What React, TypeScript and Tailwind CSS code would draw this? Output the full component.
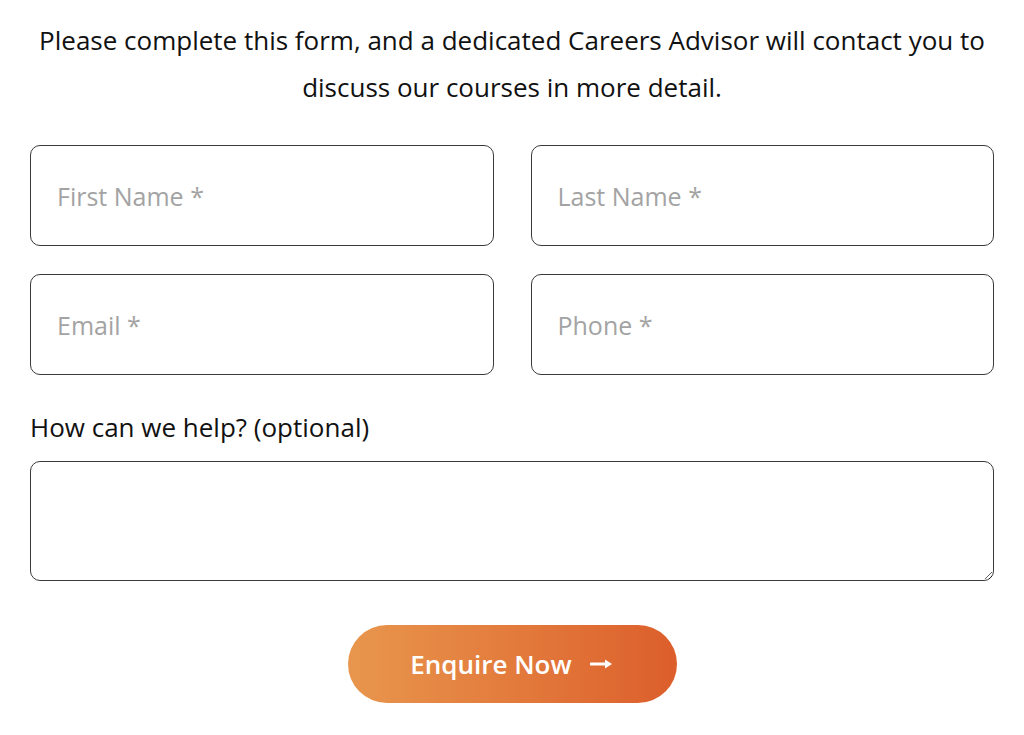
import * as React from 'react';

const Field: React.FC<{ placeholder: string }> = ({ placeholder }) => (
  <input
    type="text"
    placeholder={placeholder}
    className="h-[101px] w-full rounded-[10px] border-[1.5px] border-[#3a3a3a] bg-white pl-[26px] text-[25px] text-[#333] placeholder:text-[#a3a3a3] outline-none"
  />
);

export default function App() {
  return (
    <div
      className="min-h-[735px] w-full bg-white px-[30px] pt-[17px]"
      style={{ fontFamily: '"Open Sans", "Noto Sans", sans-serif' }}
    >
      <p className="text-center text-[26px] leading-[47px] text-[#111]">
        Please complete this form, and a dedicated Careers Advisor will contact you to
        <br />
        discuss our courses in more detail.
      </p>

      <div className="mt-[34px] grid grid-cols-2 gap-x-[37px] gap-y-[28px]">
        <Field placeholder="First Name *" />
        <Field placeholder="Last Name *" />
        <Field placeholder="Email *" />
        <Field placeholder="Phone *" />
      </div>

      <label className="mt-[35px] block text-[26px] leading-[34px] text-[#111]">
        How can we help? (optional)
      </label>
      <textarea className="mt-[17px] block h-[120px] w-full resize-y rounded-[10px] border-[1.5px] border-[#3a3a3a] bg-white px-[26px] py-3 text-[25px] outline-none" />

      <div className="mt-[44px] flex justify-center">
        <button className="flex h-[78px] w-[329px] items-center justify-center gap-[18px] rounded-full bg-gradient-to-r from-[#e8964d] to-[#dc5e2b] text-[26px] font-semibold text-white">
          <span>Enquire Now</span>
          <svg width="24" height="14" viewBox="0 0 24 14" fill="none">
            <path d="M1 7h17" stroke="white" strokeWidth="3" strokeLinecap="round" />
            <path d="M15 2.5l7 4.5-7 4.5z" fill="white" />
          </svg>
        </button>
      </div>
    </div>
  );
}
